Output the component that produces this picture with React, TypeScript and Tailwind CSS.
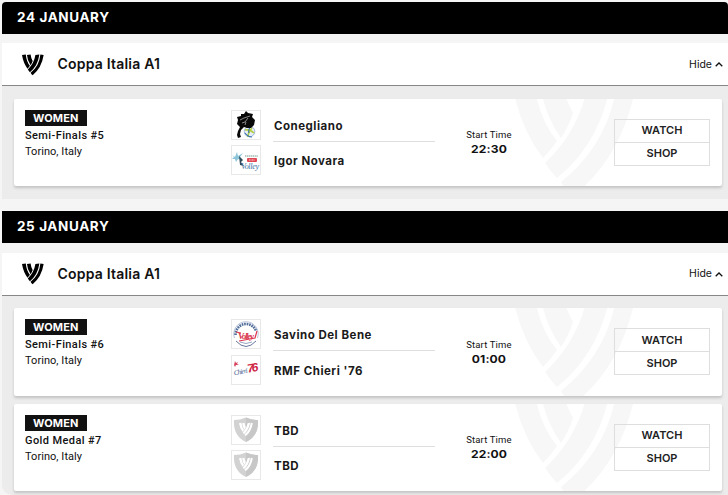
import React, { useState } from "react";
import { clsx } from "clsx";

type Team = { name: string; crest: () => React.JSX.Element };

type Match = {
  id: string;
  round: string;
  place: string;
  time: string;
  teams: Team[];
};

type MatchDay = {
  id: string;
  date: string;
  competition: string;
  matches: Match[];
};

const MarkPaths = () => (
  <>
    <path d="M0-20L22-24Q26 18 46 42Q40 51 32 59Q8 28 0-20Z" />
    <path d="M29-20L50-24Q52-4 62 14Q58 27 50 39Q31 12 29-20Z" />
    <path d="M78-20L101-24Q92 42 46 79Q40 73 34 64Q70 30 78-20Z" />
    <path d="M107-24L126-20Q114 56 62 97Q55 92 50 83Q101 42 107-24Z" />
  </>
);

const VolleyMark = ({ className }: { className?: string }) => (
  <svg viewBox="0 -25 128 125" className={className} fill="currentColor">
    <MarkPaths />
  </svg>
);

const PantherCrest = () => (
  <svg viewBox="0 0 28 28" className="size-7">
    <circle cx="17.5" cy="20.5" r="5.3" fill="#e6eef8" stroke="#7c9cc9" strokeWidth=".7" />
    <path d="M13 19q5-1 9 3M16 26q0-5 4-9" fill="none" stroke="#b4cf3d" strokeWidth="1.7" />
    <path d="M13 22q3 4 7 4M18 16q-2 4-1 6" fill="none" stroke="#356cac" strokeWidth="1.1" />
    <path
      d="M5 6l4-1 0-2 3 0 2-3 2 2 5 1-1 3 3 3-1 5-3 3-4 0-3-1-3 3-1 4 1 3-3 1-1-3 1-4 2-4-3-3 1-4Z"
      fill="#080808"
    />
    <path d="M8 9l4-2 6-2M10 12l3-1 3-4M14 11l-1 3" stroke="#aaa" strokeWidth=".8" fill="none" />
  </svg>
);

const NovaraCrest = () => (
  <svg viewBox="0 0 28 28" className="size-7">
    <path d="M0 9l3 2 2-5 1 4 5-3-3 4 2 3-4-1-2 3-1-3-3 0 2-2Z" fill="#8cc4d8" />
    <path d="M7 10l4 4-2 2 3 4-4-1Z" fill="#304a57" />
    <path d="M13 10h13" stroke="#a3bdb4" strokeWidth="1.3" strokeDasharray="1.4 .5" />
    <rect x="15" y="12" width="10" height="4" rx="1" fill="#e04953" />
    <path d="M17 14h6" stroke="#fff" strokeWidth=".8" strokeDasharray="1 .5" />
    <text
      x="9"
      y="23"
      textLength="18"
      className="fill-[#3872a6] font-['Liberation_Serif',serif] text-[8px] italic"
    >
      Volley
    </text>
  </svg>
);

const SavinoCrest = () => (
  <svg viewBox="0 0 28 28" className="size-7">
    <path
      d="M2.5 18A12.2 12.2 0 1 1 25.5 18"
      fill="none"
      stroke="#8a9cc0"
      strokeWidth=".6"
    />
    <path
      d="M3.6 15A10.5 10.5 0 0 1 24 11"
      fill="none"
      stroke="#53709c"
      strokeWidth="2.6"
      strokeDasharray="1.7 .8"
    />
    <path d="M4 21q10 11 20 0" fill="none" stroke="#65789b" strokeWidth="1" />
    <path d="M8 22q6 3 12 0" fill="none" stroke="#7d8fb0" strokeWidth=".8" />
    <text
      x="6"
      y="19"
      textLength="16"
      className="fill-[#d93850] font-['Liberation_Serif',serif] text-[9px] font-bold italic"
    >
      Volley
    </text>
    <path d="M4 12l5 1M7 21l16-3 2-7" fill="none" stroke="#e0354c" strokeWidth="1.2" />
  </svg>
);

const ChieriCrest = () => (
  <svg viewBox="0 0 28 28" className="size-7">
    <path d="M3 5l1 2 2-1-1 2 2 1-3 0-1 2-1-2Z" fill="#d8455e" />
    <g transform="rotate(-10 14 14)">
      <text
        x="1.5"
        y="17"
        textLength="14"
        className="fill-[#46628f] font-['Liberation_Serif',serif] text-[7px] italic"
      >
        Chieri
      </text>
      <text
        x="15.5"
        y="17"
        textLength="11"
        className="fill-[#cf2545] font-['Liberation_Sans',sans-serif] text-[12px] font-bold italic"
      >
        76
      </text>
    </g>
  </svg>
);

const ShieldCrest = () => (
  <svg viewBox="0 0 28 28" className="size-7">
    <path d="M14 1.5Q20 4 26 4Q27 20 14 26Q1 20 2 4Q8 4 14 1.5Z" fill="#d2d2d2" />
    <path d="M14 1.5Q20 4 26 4Q27 20 14 26Z" fill="#c7c7c7" />
    <svg x="7" y="6" width="14" height="15" viewBox="0 -25 128 125" fill="#fff">
      <MarkPaths />
    </svg>
  </svg>
);

const matchDays: MatchDay[] = [
  {
    id: "24",
    date: "24 JANUARY",
    competition: "Coppa Italia A1",
    matches: [
      {
        id: "5",
        round: "Semi-Finals #5",
        place: "Torino, Italy",
        time: "22:30",
        teams: [
          { name: "Conegliano", crest: PantherCrest },
          { name: "Igor Novara", crest: NovaraCrest },
        ],
      },
    ],
  },
  {
    id: "25",
    date: "25 JANUARY",
    competition: "Coppa Italia A1",
    matches: [
      {
        id: "6",
        round: "Semi-Finals #6",
        place: "Torino, Italy",
        time: "01:00",
        teams: [
          { name: "Savino Del Bene", crest: SavinoCrest },
          { name: "RMF Chieri '76", crest: ChieriCrest },
        ],
      },
      {
        id: "7",
        round: "Gold Medal #7",
        place: "Torino, Italy",
        time: "22:00",
        teams: [
          { name: "TBD", crest: ShieldCrest },
          { name: "TBD", crest: ShieldCrest },
        ],
      },
    ],
  },
];

const MatchCard = ({ match }: { match: Match }) => (
  <article className="relative flex h-[87.5px] overflow-hidden rounded-[2px] bg-white shadow-[0_2px_3px_rgba(0,0,0,0.18)]">
    <VolleyMark className="absolute -top-[25px] left-[497px] h-[125px] w-[128px] text-[#f7f7f7]" />

    <div className="w-[217px] pt-[11px] pl-[11px] font-[Roboto,sans-serif] text-[11px] leading-4 text-[#111]">
      <span className="block h-4 w-[62px] bg-[#111] pl-2 font-[Inter,sans-serif] text-[11px] leading-4 font-bold tracking-[0.1px] text-white">
        WOMEN
      </span>
      <p className="mt-[2px] font-medium tracking-[0.4px]">{match.round}</p>
      <p className="tracking-[0.05px]">{match.place}</p>
    </div>

    <div className="flex w-[204px] flex-col pt-[11px]">
      {match.teams.map((team, index) => {
        const Crest = team.crest;
        return (
          <div key={index} className="flex h-[35.5px]">
            <div className="h-[30px] w-[30px] shrink-0 border border-[#e8e8e8] bg-white">
              <Crest />
            </div>
            <div
              className={clsx(
                "ml-3 h-8 flex-1 pl-px font-[Inter,sans-serif] text-[11.5px] leading-[32px] font-bold tracking-[0.5px] text-[#1a1a1a]",
                index === 0 && "border-b border-[#dedede]",
              )}
            >
              {team.name}
            </div>
          </div>
        );
      })}
    </div>

    <div className="relative ml-[14px] w-[80px] pt-[29.5px] text-center text-[#111]">
      <p className="font-[Roboto,sans-serif] text-[9.5px] leading-[14px] tracking-[0.15px]">
        Start Time
      </p>
      <p className="scale-x-110 font-[Inter,sans-serif] text-[11px] leading-[14px] font-bold tracking-[0.1px]">
        {match.time}
      </p>
    </div>

    <div className="relative mt-[20px] mr-3 ml-auto flex h-[47px] w-[96px] flex-col border border-[#dedede] font-[Inter,sans-serif] text-[11px] font-semibold text-[#222]">
      <button className="h-[23px] border-b border-[#dedede] leading-[21px]">WATCH</button>
      <button className="h-[22px] leading-[21px]">SHOP</button>
    </div>
  </article>
);

const Competition = ({ day }: { day: MatchDay }) => {
  const [isOpen, setIsOpen] = useState<boolean>(true);

  return (
    <section className="group mb-[12.6px]">
      <h2 className="h-8 bg-black pl-[15px] font-[Inter,sans-serif] text-[13.5px] leading-[31px] font-bold tracking-[0.6px] text-white group-first:rounded-t-[4px]">
        {day.date}
      </h2>
      <div className="mt-[9.3px] flex h-[43px] items-center border-b border-[#858885] bg-white pr-[5px] pl-5 text-[#111]">
        <VolleyMark className="mt-px h-[22px] w-[22px] text-black" />
        <h3 className="ml-[13.5px] font-[Inter,sans-serif] text-[14px] leading-5 font-semibold tracking-[0.2px]">
          {day.competition}
        </h3>
        <button
          onClick={() => setIsOpen(!isOpen)}
          className="mt-px ml-auto flex items-center gap-[3px] font-[Inter,sans-serif] text-[10.5px]"
        >
          Hide
          <svg viewBox="0 0 8 5" className={clsx("h-[5px] w-2", !isOpen && "rotate-180")}>
            <path d="M.7 4.3L4 1L7.3 4.3" fill="none" stroke="currentColor" strokeWidth="1.3" />
          </svg>
        </button>
      </div>
      {isOpen && (
        <div className="flex flex-col gap-2 bg-[#ececec] pt-[12.5px] pr-[6px] pb-[12.5px] pl-3 group-last:rounded-bl-[10px] group-last:pb-1">
          {day.matches.map((match) => (
            <MatchCard key={match.id} match={match} />
          ))}
        </div>
      )}
    </section>
  );
};

const App = () => {
  return (
    <main className="h-[495px] overflow-hidden bg-[#f5f5f5] pt-[2px] pl-[2px]">
      {matchDays.map((day) => (
        <Competition key={day.id} day={day} />
      ))}
    </main>
  );
};

export default App;
